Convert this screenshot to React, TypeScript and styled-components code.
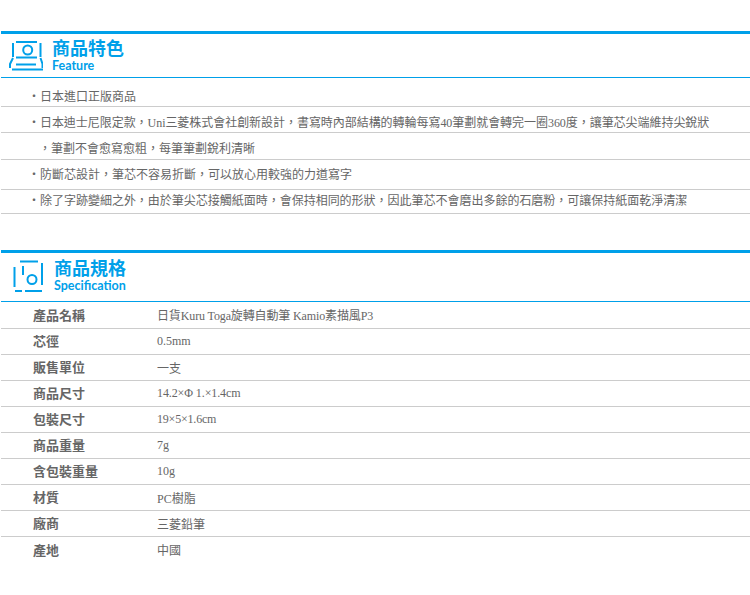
import React from "react";
import styled, { createGlobalStyle } from "styled-components";

const Global = createGlobalStyle`
  html, body { margin: 0; padding: 0; background: #fff; }
  body { font-family: "Liberation Serif", "Noto Sans CJK TC", serif; font-size: 12px; color: #666; }
`;
const Page = styled.div`
  width: 750px;
  height: 595px;
  padding-top: 31px;
  box-sizing: border-box;
  overflow: hidden;
`;
const Section = styled.section<{ $gap: number }>`
  margin-bottom: ${(p) => p.$gap}px;
  padding-left: 1px;
`;
const Head = styled.header<{ $h: number }>`
  height: ${(p) => p.$h}px;
  box-sizing: border-box;
  border-top: 3px solid #00a0e9;
  border-bottom: 1px solid #00a0e9;
  display: flex;
  align-items: flex-start;
  gap: 9px;
  padding-left: 8px;
  svg { margin-top: 7px; flex: none; }
`;
const Titles = styled.div<{ $top: number }>`
  display: flex;
  flex-direction: column;
  margin-top: ${(p) => p.$top}px;
  color: #00a0e9;
  font-weight: 700;
`;
const Zh = styled.div`
  font-family: "Noto Sans CJK TC", sans-serif;
  font-size: 18px;
  line-height: 20px;
  margin-bottom: 2px;
`;
const En = styled.div`
  font-family: Lato, sans-serif;
  font-size: 12.5px;
  line-height: 14px;
`;
const Bullet = styled.div<{ $h: number; $top: number; $indent?: boolean; $track?: number }>`
  height: ${(p) => p.$h}px;
  box-sizing: border-box;
  border-bottom: 1px solid #ccc;
  padding: ${(p) => p.$top}px 0 0 ${(p) => (p.$indent ? 38 : 27)}px;
  line-height: 17px;
  letter-spacing: ${(p) => p.$track ?? 0}px;
  white-space: nowrap;
`;
const Row = styled.div`
  height: 26px;
  box-sizing: border-box;
  border-bottom: 1px solid #ccc;
  display: flex;
  align-items: center;
  white-space: nowrap;
  ${Head} + & { height: 27px; }
  &:last-child { border-bottom: 0; }
`;
const Label = styled.div`
  width: 156px;
  padding: 0 0 2px 32px;
  box-sizing: border-box;
  font-size: 13px;
  font-weight: 700;
  font-family: "Noto Sans CJK TC", sans-serif;
`;
const Value = styled.div<{ $track?: number }>`
  letter-spacing: ${(p) => p.$track ?? 0}px;
`;

const FeatureIcon = () => (
  <svg width="34" height="30" viewBox="0 0 35 30" fill="none" stroke="#00a0e9" strokeWidth="2" preserveAspectRatio="xMinYMin slice">
    <path d="M7 1h21M4 2v14M31.500 2v14M7 16.500h21" />
    <circle cx="18.700" cy="9" r="4.500" />
    <path d="M4 17l-3 6v4M31.500 17l2 6v4M7 23.500h20M3 28.500h31" />
  </svg>
);
const SpecIcon = () => (
  <svg width="36" height="33" viewBox="0 0 36 33" fill="none" stroke="#00a0e9" strokeWidth="2">
    <path d="M11 1.500h18M33 3v22M6 31h7M16 31h17M5.500 7v20M14 6v9" />
    <circle cx="23" cy="19.500" r="4.500" />
  </svg>
);

const bullets: [number, number, string, boolean?, number?][] = [
  [29, 11, "・日本進口正版商品"],
  [26, 8, "・日本迪士尼限定款，Uni三菱株式會社創新設計，書寫時內部結構的轉輪每寫40筆劃就會轉完一圈360度，讓筆芯尖端維持尖銳狀", false, -0.045],
  [27, 8, "，筆劃不會愈寫愈粗，每筆筆劃銳利清晰", true],
  [30, 7, "・防斷芯設計，筆芯不容易折斷，可以放心用較強的力道寫字"],
  [24, 3, "・除了字跡變細之外，由於筆尖芯接觸紙面時，會保持相同的形狀，因此筆芯不會磨出多餘的石磨粉，可讓保持紙面乾淨清潔", false, -0.015],
];
const specs: [string, string, number?][] = [
  ["產品名稱", "日貨Kuru Toga旋轉自動筆 Kamio素描風P3", -0.13],
  ["芯徑", "0.5mm"],
  ["販售單位", "一支"],
  ["商品尺寸", "14.2×Φ 1.×1.4cm", -0.1],
  ["包裝尺寸", "19×5×1.6cm", -0.2],
  ["商品重量", "7g"],
  ["含包裝重量", "10g"],
  ["材質", "PC樹脂"],
  ["廠商", "三菱鉛筆"],
  ["產地", "中國"],
];

const TitleBlock = ({ zh, en, top }: { zh: string; en: string; top: number }) => (
  <Titles $top={top}>
    <Zh>{zh}</Zh>
    <En>{en}</En>
  </Titles>
);

export default function App() {
  return (
    <Page>
      <Global />
      <Section $gap={36}>
        <Head $h={47}>
          <FeatureIcon />
          <TitleBlock zh="商品特色" en="Feature" top={3} />
        </Head>
        {bullets.map(([h, top, t, i, tr]) => (
          <Bullet key={t} $h={h} $top={top} $indent={i} $track={tr}>{t}</Bullet>
        ))}
      </Section>
      <Section $gap={0}>
        <Head $h={52}>
          <SpecIcon />
          <TitleBlock zh="商品規格" en="Specification" top={4} />
        </Head>
        {specs.map(([l, v, tr]) => (
          <Row key={l}>
            <Label>{l}</Label>
            <Value $track={tr}>{v}</Value>
          </Row>
        ))}
      </Section>
    </Page>
  );
}
